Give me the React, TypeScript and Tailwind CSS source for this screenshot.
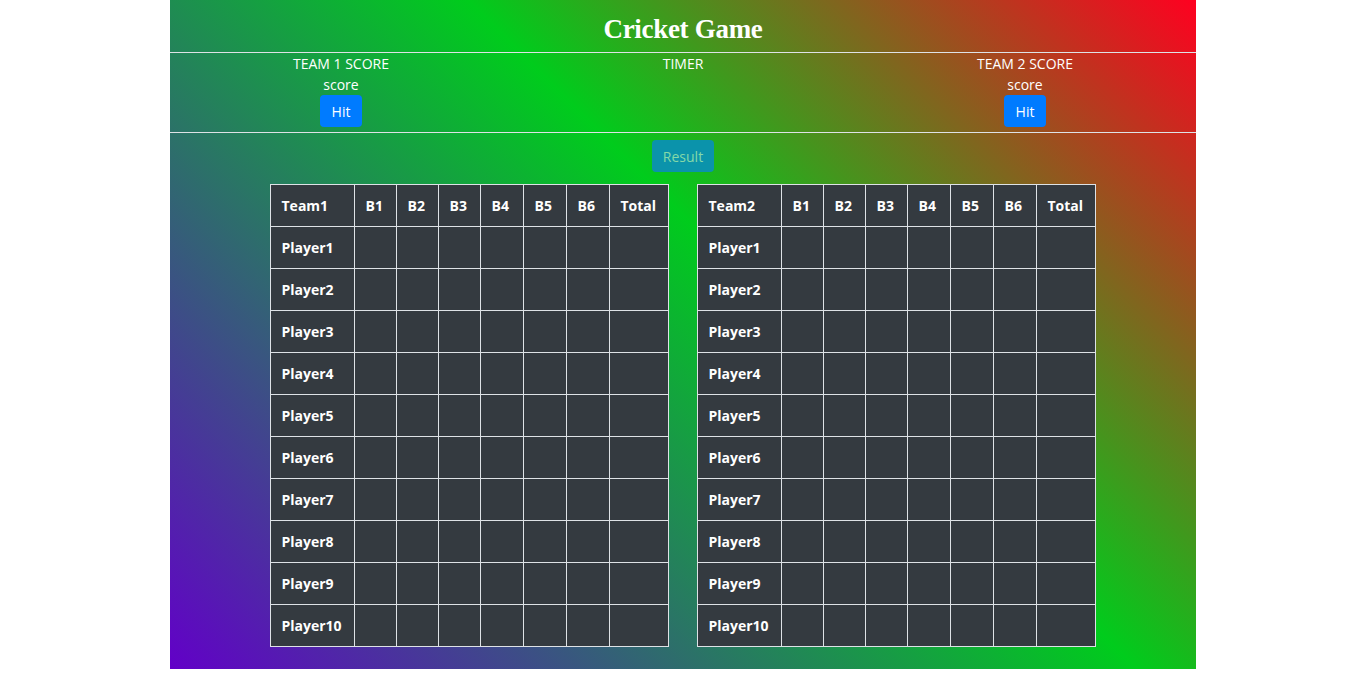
import React from "react";

const cols = ["B1", "B2", "B3", "B4", "B5", "B6", "Total"];
const widths = [84, 42, 42, 42, 43, 43, 43, 59];

function ScoreTable({ team }: { team: string }) {
  const players = Array.from({ length: 10 }, (_, i) => `Player${i + 1}`);
  return (
    <table className="table-fixed border-collapse w-[398px] bg-[#343a40] text-white text-[14px] font-bold">
      <colgroup>
        {widths.map((w, i) => (
          <col key={i} style={{ width: w }} />
        ))}
      </colgroup>
      <thead>
        <tr className="h-[42px]">
          <th className="border border-[#dee2e6] text-left pl-[11px] font-bold">{team}</th>
          {cols.map((c) => (
            <th key={c} className="border border-[#dee2e6] text-left pl-[11px] font-bold">
              {c}
            </th>
          ))}
        </tr>
      </thead>
      <tbody>
        {players.map((p) => (
          <tr key={p} className="h-[42px]">
            <td className="border border-[#dee2e6] pl-[11px]">{p}</td>
            {cols.map((c) => (
              <td key={c} className="border border-[#dee2e6]"></td>
            ))}
          </tr>
        ))}
      </tbody>
    </table>
  );
}

export default function App() {
  return (
    <div className="min-h-screen bg-white flex justify-center" style={{ fontFamily: "'Open Sans', 'Noto Sans', sans-serif" }}>
      <div className="w-[1026px] h-[669px] text-white bg-[linear-gradient(45deg,#6200c8_0%,#00cc1c_57%,#ff0020_100%)]">
        <div className="h-[52px] flex items-center justify-center">
          <h1 className="text-[27px] font-bold leading-none pt-[7px] tracking-[-0.3px]" style={{ fontFamily: "'Liberation Serif', 'DejaVu Serif', serif" }}>
            Cricket Game
          </h1>
        </div>
        <div className="border-t border-b border-[#dee2e6] h-[81px] grid grid-cols-3 text-[14px] leading-[21px]">
          <div className="flex flex-col items-center">
            <div>TEAM 1 SCORE</div>
            <div>score</div>
            <button className="w-[42px] h-[32px] bg-[#007bff] rounded-[4px] text-white">Hit</button>
          </div>
          <div className="flex flex-col items-center">
            <div>TIMER</div>
          </div>
          <div className="flex flex-col items-center">
            <div>TEAM 2 SCORE</div>
            <div>score</div>
            <button className="w-[42px] h-[32px] bg-[#007bff] rounded-[4px] text-white">Hit</button>
          </div>
        </div>
        <div className="flex justify-center pt-[7px]">
          <button className="w-[62px] h-[32px] rounded-[4px] bg-[#0b93ab] text-[#84d9a8] text-[14px]">Result</button>
        </div>
        <div className="flex justify-center gap-[28px] mt-[12px] pr-[1px]">
          <ScoreTable team="Team1" />
          <ScoreTable team="Team2" />
        </div>
      </div>
    </div>
  );
}
